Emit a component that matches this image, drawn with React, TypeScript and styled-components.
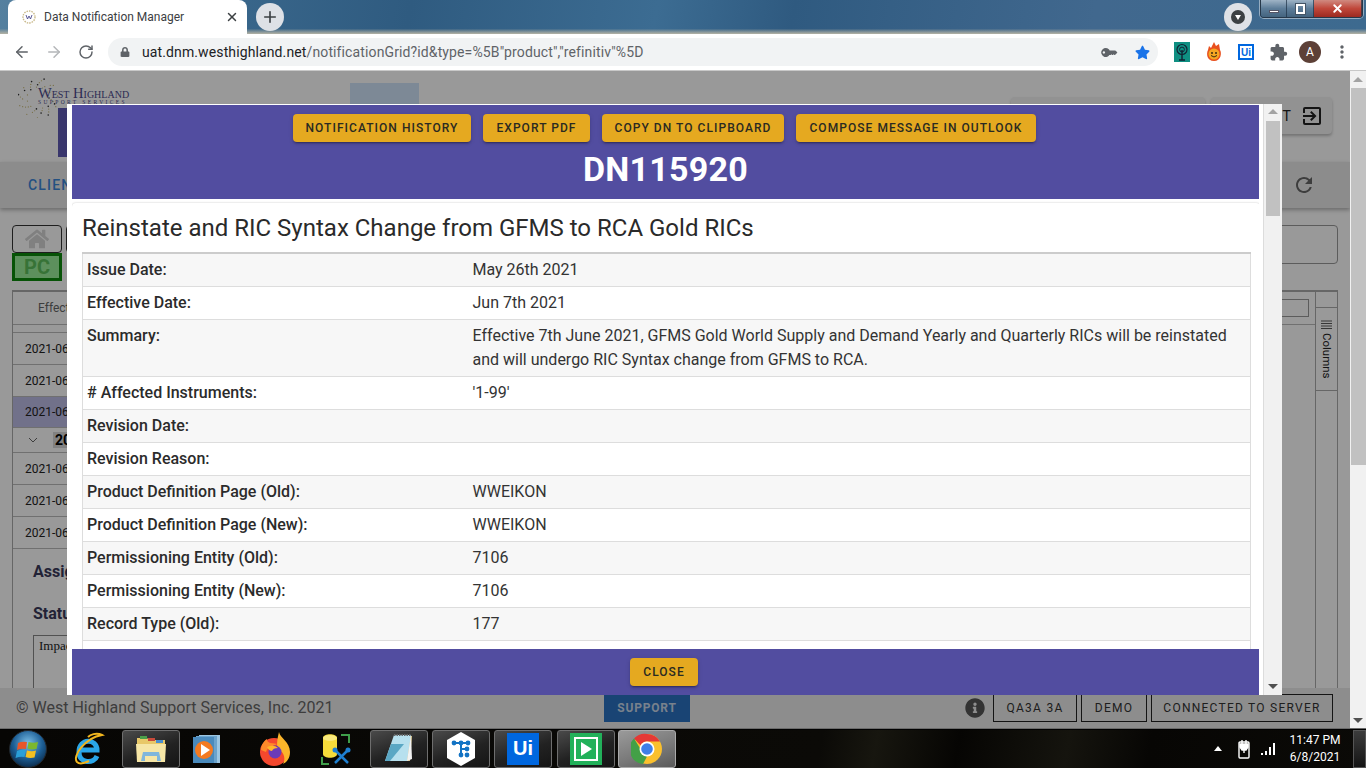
import React from "react";
import styled, { createGlobalStyle } from "styled-components";
import { ArrowLeft, ArrowRight, RotateCw, Plus, X } from "lucide-react";
import { FaHome, FaInfoCircle, FaLock, FaStar, FaKey } from "react-icons/fa";
import { MdExitToApp, MdExtension, MdMoreVert, MdRefresh } from "react-icons/md";

const GlobalStyle = createGlobalStyle`
    html, body {
        margin: 0;
        padding: 0;
        width: 1366px;
        height: 768px;
        overflow: hidden;
        font-family: Roboto, "Liberation Sans", sans-serif;
    }
    * {
        box-sizing: border-box;
    }
`;

const Screen = styled.div`
    width: 1366px;
    height: 768px;
    display: flex;
    flex-direction: column;
    overflow: hidden;
`;

/* browser chrome */
const TabStrip = styled.div`
    height: 34px;
    flex: none;
    position: relative;
    display: flex;
    align-items: flex-start;
    padding-left: 8px;
    background:
        linear-gradient(180deg, rgba(0, 0, 0, 0) 84%, #b5b3a4 100%),
        linear-gradient(100deg, #55809f 0%, #3e6c90 10%, #2f5b80 30%, #3c6c92 48%, #2f5a80 58%, #355f85 65%, #41688e 80%, #3d6a8f 100%);
`;

const Tab = styled.div`
    width: 239px;
    height: 34px;
    background: #fff;
    border-radius: 8px 8px 0 0;
    display: flex;
    align-items: center;
    padding: 0 8px 0 14px;
    color: #3c4043;
    font-size: 12px;
`;

const TabFavicon = styled.svg`
    width: 14px;
    height: 14px;
    margin-right: 8px;
    flex: none;
`;

const TabTitle = styled.span`
    flex: 1;
    white-space: nowrap;
`;

const NewTab = styled.div`
    width: 28px;
    height: 28px;
    margin: 3px 0 0 9px;
    border-radius: 50%;
    background: #dee1e6;
    color: #3c4043;
    display: flex;
    align-items: center;
    justify-content: center;
`;

const ProfileDrop = styled.div`
    position: absolute;
    left: 1224px;
    top: 3px;
    width: 28px;
    height: 28px;
    border-radius: 50%;
    background: #dee1e6;
    display: flex;
    align-items: center;
    justify-content: center;
`;

const ProfileDot = styled.div`
    width: 14px;
    height: 14px;
    border-radius: 50%;
    background: #3c4043;
    display: flex;
    align-items: center;
    justify-content: center;
    &::after {
        content: "";
        border-left: 3.5px solid transparent;
        border-right: 3.5px solid transparent;
        border-top: 5px solid #fff;
    }
`;

const WindowControls = styled.div`
    position: absolute;
    left: 1260px;
    top: 0;
    width: 103px;
    height: 18px;
    display: flex;
    border: 1px solid #26384a;
    border-top: none;
    border-radius: 0 0 4px 4px;
    overflow: hidden;
    box-shadow: 0 0 0 1px rgba(255, 255, 255, 0.45);
`;

const WinButton = styled.div<{ $w: number; $close?: boolean }>`
    width: ${({ $w }) => $w}px;
    display: flex;
    align-items: center;
    justify-content: center;
    color: #fff;
    border-right: 1px solid rgba(30, 50, 70, 0.7);
    background: ${({ $close }) =>
        $close
            ? "linear-gradient(180deg, #d08a80 0%, #c0473a 50%, #9c2a20 100%)"
            : "linear-gradient(180deg, #9fb4c6 0%, #5d7d99 50%, #44647f 100%)"};
`;

const MinGlyph = styled.div`
    width: 10px;
    height: 3px;
    margin-top: 5px;
    background: #fff;
    border: 1px solid #556;
`;

const RestoreGlyph = styled.div`
    width: 9px;
    height: 10px;
    border: 2px solid #fff;
    outline: 1px solid #456;
`;

const Toolbar = styled.div`
    height: 37px;
    flex: none;
    display: flex;
    align-items: center;
    background: #fff;
    border-bottom: 1px solid #c8c8c8;
    padding-left: 13px;
`;

const NavIcon = styled.div<{ $faded?: boolean }>`
    width: 18px;
    height: 18px;
    margin-right: 14px;
    color: ${({ $faded }) => ($faded ? "#b4b6b9" : "#5f6368")};
    display: flex;
    align-items: center;
    justify-content: center;
`;

const Omnibox = styled.div`
    width: 1054px;
    height: 28px;
    margin-left: -1px;
    border-radius: 14px;
    background: #f1f3f4;
    display: flex;
    align-items: center;
    padding: 0 8px 0 12px;
    color: #5f6368;
`;

const Url = styled.div`
    margin-left: 12px;
    flex: 1;
    font-size: 14px;
    letter-spacing: 0.12px;
    color: #5f6368;
    white-space: nowrap;
    b {
        font-weight: 400;
        color: #202124;
    }
`;

const KeyIcon = styled(FaKey)`
    transform: scaleX(-1) rotate(45deg);
`;

const StarIcon = styled(FaStar)`
    margin-left: 20px;
    color: #1a73e8;
`;

const Extensions = styled.div`
    display: flex;
    align-items: center;
    margin-left: 16px;
`;

const ExtSlot = styled.div<{ $w: number }>`
    width: ${({ $w }) => $w}px;
    display: flex;
    align-items: center;
    justify-content: center;
    color: #5f6368;
`;

const UiBadge = styled.div<{ $size: number; $outlined?: boolean }>`
    width: ${({ $size }) => $size}px;
    height: ${({ $size }) => $size}px;
    flex: none;
    display: flex;
    align-items: center;
    justify-content: center;
    font-weight: 700;
    font-family: "Liberation Sans", sans-serif;
    font-size: ${({ $size }) => Math.round($size * 0.62)}px;
    background: ${({ $outlined }) => ($outlined ? "#fff" : "#0067df")};
    color: ${({ $outlined }) => ($outlined ? "#0067df" : "#fff")};
    border: ${({ $outlined }) => ($outlined ? "2px solid #0067df" : "none")};
`;

const Avatar = styled.div`
    width: 22px;
    height: 22px;
    flex: none;
    border-radius: 50%;
    background: #5d4037;
    color: #fff;
    font-size: 12px;
    display: flex;
    align-items: center;
    justify-content: center;
`;

/* application behind the dialog */
const Page = styled.div`
    height: 657px;
    flex: none;
    display: flex;
`;

const Viewport = styled.div`
    width: 1350px;
    height: 657px;
    position: relative;
    overflow: hidden;
    display: flex;
    flex-direction: column;
    background: #fff;
`;

const PageScrollbar = styled.div`
    width: 16px;
    background: #f1f1f1;
    display: flex;
    flex-direction: column;
    align-items: center;
    justify-content: space-between;
    padding: 6px 0 5px;
    position: relative;
`;

const PageThumb = styled.div`
    position: absolute;
    left: 1px;
    right: 0;
    top: 17px;
    height: 377px;
    background: #c1c1c1;
`;

const ScrollArrow = styled.div<{ $down?: boolean; $color?: string }>`
    width: 0;
    height: 0;
    border-left: 5px solid transparent;
    border-right: 5px solid transparent;
    ${({ $down, $color }) =>
        $down
            ? `border-top: 5px solid ${$color || "#505050"};`
            : `border-bottom: 5px solid ${$color || "#a3a3a3"};`}
`;

const TopBar = styled.div`
    height: 91px;
    flex: none;
    display: flex;
    align-items: flex-start;
    padding: 7px 18px 0;
    position: relative;
`;

const Logo = styled.div`
    width: 118px;
    height: 36px;
    display: flex;
    align-items: center;
    position: relative;
`;

const LogoRing = styled.svg`
    position: absolute;
    left: 0;
    top: 0;
    width: 42px;
    height: 40px;
`;

const LogoText = styled.div`
    margin-left: 20px;
    font-family: "Liberation Serif", serif;
    color: #4b4a8c;
    position: relative;
`;

const LogoName = styled.div`
    font-variant: small-caps;
    font-size: 14.5px;
    line-height: 12px;
    white-space: nowrap;
`;

const LogoSub = styled.div`
    font-size: 5.5px;
    letter-spacing: 2.4px;
    line-height: 7px;
    white-space: nowrap;
`;

const PurpleBlock = styled.div`
    position: absolute;
    left: 58px;
    top: 37px;
    width: 100px;
    height: 49px;
    background: #5f5ab5;
`;

const TabBlock = styled.div`
    width: 69px;
    height: 24px;
    margin: 5px 0 0 214px;
    background: #d0e4fa;
`;

const RaisedButton = styled.div<{ $w: number }>`
    width: ${({ $w }) => $w}px;
    height: 37px;
    background: #f3f3f3;
    border-radius: 4px;
    margin-top: 19px;
    margin-left: 6px;
    box-shadow: 0 2px 3px rgba(0, 0, 0, 0.25);
    display: flex;
    align-items: center;
    justify-content: flex-end;
    padding-right: 8px;
    font-size: 14px;
    letter-spacing: 1.2px;
    color: #222;
`;

const LogoutIcon = styled(MdExitToApp)`
    margin-left: 8px;
`;

const Spacer = styled.div`
    flex: 1;
`;

const NavBar = styled.div`
    height: 46px;
    flex: none;
    display: flex;
    align-items: center;
    padding: 0 34px 0 28px;
    background: #eaeaea;
    box-shadow: 0 2px 4px rgba(0, 0, 0, 0.3);
    color: #3c86d8;
    font-size: 14px;
    font-weight: 500;
    letter-spacing: 1.2px;
`;

const Content = styled.div`
    flex: 1;
    min-height: 0;
    overflow: hidden;
    padding: 17px 12px 0 12px;
`;

const ToolRow = styled.div`
    display: flex;
    align-items: flex-start;
`;

const ToolColumn = styled.div`
    width: 50px;
`;

const HomeButton = styled.div`
    height: 28px;
    border: 1px solid #333;
    border-radius: 4px;
    color: #d5d5d5;
    display: flex;
    align-items: center;
    justify-content: center;
`;

const ToolButton = styled.div`
    width: 60px;
    height: 28px;
    margin-left: 4px;
    border: 1px solid #333;
    border-radius: 4px;
`;

const PcChip = styled.div`
    height: 28px;
    background: #9cf09c;
    border: 3px solid #0d8a0d;
    color: #5cc05c;
    font-weight: 700;
    font-size: 20px;
    display: flex;
    align-items: center;
    justify-content: center;
`;

const SearchBox = styled.div`
    width: 500px;
    height: 39px;
    border: 1px solid #999;
    border-radius: 4px;
`;

const Grid = styled.div`
    margin-top: 9px;
    display: flex;
    height: 600px;
    border: 1px solid #aaa;
    border-top-width: 2px;
`;

const GridMain = styled.div`
    flex: 1;
    min-width: 0;
`;

const GridHeader = styled.div`
    height: 33px;
    display: flex;
    align-items: center;
    padding: 0 6px 0 25px;
    font-size: 12px;
    color: #666;
    border-bottom: 1px solid #bbb;
`;

const FilterInput = styled.div`
    margin-left: auto;
    width: 60px;
    height: 18px;
    border: 1px solid #999;
`;

const GridGap = styled.div`
    width: 400px;
    height: 8px;
    border-bottom: 1px solid #bbb;
`;

const GridRow = styled.div<{ $selected?: boolean; $h?: number }>`
    width: 400px;
    height: ${({ $h }) => $h || 32}px;
    display: flex;
    align-items: center;
    padding-left: 12px;
    font-size: 12px;
    color: #222;
    border-bottom: 1px solid #bbb;
    background: ${({ $selected }) => ($selected ? "#bcbce6" : "transparent")};
`;

const GroupChevron = styled.svg`
    width: 10px;
    height: 6px;
    margin: 0 15px 0 3px;
`;

const GroupLabel = styled.span`
    font-size: 14px;
    font-weight: 700;
    color: #000;
    background: #d8d8d8;
    padding: 0 2px;
`;

const Details = styled.div`
    padding: 13px 0 0 20px;
`;

const DetailLabel = styled.div`
    font-size: 16px;
    font-weight: 700;
    color: #3a3a5a;
    line-height: 19px;
    margin-bottom: 23px;
`;

const DetailBox = styled.div`
    margin-top: -11px;
    width: 500px;
    height: 120px;
    border: 1px solid #888;
    padding: 2px 5px;
    font-family: "Liberation Serif", serif;
    font-size: 13px;
    color: #222;
`;

const SidePanel = styled.div`
    width: 22px;
    flex: none;
    border-left: 1px solid #aaa;
`;

const SideCell = styled.div`
    height: 16px;
    border-bottom: 1px solid #aaa;
`;

const ColumnsTab = styled.div`
    height: 83px;
    border-bottom: 1px solid #aaa;
    display: flex;
    flex-direction: column;
    align-items: center;
    padding-top: 12px;
    font-size: 11.5px;
    color: #222;
`;

const ColumnsLabel = styled.span`
    writing-mode: vertical-rl;
    margin-top: 4px;
`;

const PageFooter = styled.div`
    height: 40px;
    flex: none;
    display: flex;
    align-items: center;
    padding: 0 17px 0 16px;
    background: #ececec;
    position: relative;
    font-size: 16px;
    color: #666;
`;

const Copyright = styled.div`
    width: 588px;
    font-weight: 400;
    padding-bottom: 1px;
`;

const SupportButton = styled.div`
    width: 86px;
    height: 27px;
    margin-top: 1px;
    padding-bottom: 1px;
    background: #2a72c2;
    color: #c8d8ea;
    font-size: 12px;
    font-weight: 700;
    letter-spacing: 0.8px;
    display: flex;
    align-items: center;
    justify-content: center;
`;

const InfoIcon = styled.div`
    margin-left: auto;
    margin-right: 4px;
    color: #555;
    display: flex;
`;

const StatusChip = styled.div<{ $w: number }>`
    width: ${({ $w }) => $w}px;
    height: 28px;
    margin-left: 4px;
    border: 1px solid #222;
    color: #333;
    font-size: 12px;
    letter-spacing: 1.25px;
    display: flex;
    align-items: center;
    justify-content: center;
    white-space: nowrap;
`;

const Overlay = styled.div`
    position: absolute;
    inset: 0;
    background: rgba(0, 0, 0, 0.4);
`;

/* dialog */
const Modal = styled.div`
    position: absolute;
    left: 67px;
    top: 33px;
    width: 1215px;
    height: 591px;
    background: #fff;
    display: flex;
`;

const ModalMain = styled.div`
    width: 1197px;
    padding: 1px 4px 0 5px;
    display: flex;
    flex-direction: column;
    border-right: 1px solid #dcdcdc;
`;

const ModalScrollbar = styled.div`
    flex: 1;
    background: #f1f1f1;
    position: relative;
    display: flex;
    flex-direction: column;
    align-items: center;
    justify-content: space-between;
    padding: 5px 0 6px;
`;

const ModalThumb = styled.div`
    position: absolute;
    left: 2px;
    right: 2px;
    top: 17px;
    height: 95px;
    background: #c1c1c1;
`;

const ModalHeader = styled.div`
    height: 94px;
    flex: none;
    background: #524da0;
    display: flex;
    flex-direction: column;
    align-items: center;
    padding-top: 9px;
`;

const ActionRow = styled.div`
    display: flex;
    gap: 12px;
    margin-left: -3px;
`;

const ActionButton = styled.button`
    height: 28px;
    padding: 0 13px;
    border: none;
    border-radius: 4px;
    background: #e5a920;
    color: #2a2a22;
    font-family: Roboto, sans-serif;
    font-size: 12px;
    font-weight: 500;
    letter-spacing: 1.05px;
    text-transform: uppercase;
    white-space: nowrap;
    box-shadow: 0 3px 1px -2px rgba(0, 0, 0, 0.2), 0 2px 2px 0 rgba(0, 0, 0, 0.14), 0 1px 5px 0 rgba(0, 0, 0, 0.12);
`;

const DnTitle = styled.h4`
    margin: 7px 0 0;
    font-size: 34px;
    line-height: 40px;
    font-weight: 700;
    letter-spacing: 0.25px;
    color: #fff;
`;

const ModalBody = styled.div`
    flex: 1;
    min-height: 0;
    overflow: hidden;
    padding-top: 4px;
`;

const Card = styled.div`
    margin-right: -1px;
    padding: 0 9px 20px 10px;
    border-radius: 4px;
    background: #fff;
    box-shadow: 0 0 2px rgba(0, 0, 0, 0.25);
`;

const CardTitle = styled.h5`
    margin: 0;
    padding: 9px 0 8px;
    font-size: 24px;
    line-height: 32px;
    font-weight: 400;
    color: #2a2a2a;
    white-space: nowrap;
`;

const InfoTable = styled.table`
    width: 100%;
    border-collapse: collapse;
    table-layout: fixed;
    border: 1px solid #ddd;
    border-top: 2px solid #ccc;
    font-size: 16px;
    line-height: 24px;
    color: #333;
    tr:nth-child(odd) {
        background: #f7f7f7;
    }
`;

const LabelCell = styled.th`
    width: 385px;
    padding: 4px;
    text-align: left;
    vertical-align: top;
    font-weight: 500;
    color: #2b2b2b;
    border-top: 1px solid #ddd;
`;

const ValueCell = styled.td`
    padding: 4px 5px;
    vertical-align: top;
    border-top: 1px solid #ddd;
`;

const ModalFooter = styled.div`
    height: 46px;
    flex: none;
    background: #524da0;
    display: flex;
    align-items: center;
    justify-content: center;
    padding-right: 3px;
`;

/* windows taskbar */
const Taskbar = styled.div`
    height: 40px;
    flex: none;
    display: flex;
    align-items: center;
    background: linear-gradient(100deg, #070604 0%, #0b0a07 60%, #17160f 64%, #060503 70%, #15140e 78%, #070604 84%, #0b0a07 100%);
    border-top: 1px solid #6a6a6a;
    box-shadow: inset 0 1px 0 #000;
`;

const TaskSlot = styled.div<{ $w: number; $ml?: number; $state?: "active" | "light" }>`
    width: ${({ $w }) => $w}px;
    height: 38px;
    flex: none;
    margin-left: ${({ $ml }) => $ml || 0}px;
    display: flex;
    align-items: center;
    justify-content: center;
    border-radius: 3px;
    ${({ $state }) =>
        $state === "active"
            ? "border: 1px solid #6e6e6e; background: linear-gradient(160deg, #4a4a4a 0%, #222 55%, #151515 100%);"
            : $state === "light"
            ? "border: 1px solid #aaa; background: linear-gradient(160deg, #9a9a9a 0%, #7a7a7a 55%, #5a5a5a 100%);"
            : ""}
`;

const Tray = styled.div`
    margin-left: auto;
    display: flex;
    align-items: center;
    height: 38px;
`;

const TrayArrow = styled.div`
    width: 0;
    height: 0;
    border-left: 4px solid transparent;
    border-right: 4px solid transparent;
    border-bottom: 5px solid #fff;
    margin-right: 16px;
`;

const TrayIcon = styled.svg`
    display: block;
    margin-right: 9px;
`;

const Clock = styled.div`
    width: 58px;
    text-align: center;
    color: #fff;
    font-size: 12px;
    line-height: 17px;
`;

const ShowDesktop = styled.div`
    width: 13px;
    height: 38px;
    margin-left: 9px;
    border: 1px solid #555;
    background: linear-gradient(180deg, #3c3c3c, #141414);
`;

const ROWS: { label: string; value?: string; lines?: string[] }[] = [
    { label: "Issue Date:", value: "May 26th 2021" },
    { label: "Effective Date:", value: "Jun 7th 2021" },
    {
        label: "Summary:",
        lines: [
            "Effective 7th June 2021, GFMS Gold World Supply and Demand Yearly and Quarterly RICs will be reinstated",
            "and will undergo RIC Syntax change from GFMS to RCA.",
        ],
    },
    { label: "# Affected Instruments:", value: "'1-99'" },
    { label: "Revision Date:" },
    { label: "Revision Reason:" },
    { label: "Product Definition Page (Old):", value: "WWEIKON" },
    { label: "Product Definition Page (New):", value: "WWEIKON" },
    { label: "Permissioning Entity (Old):", value: "7106" },
    { label: "Permissioning Entity (New):", value: "7106" },
    { label: "Record Type (Old):", value: "177" },
    { label: "" },
];

const Favicon = () => (
    <TabFavicon viewBox="0 0 14 14">
        <circle cx="7" cy="7" r="6" fill="none" stroke="#c9b98a" strokeWidth="1.4" strokeDasharray="1.5 1" />
        <path d="M4 5l1.5 4L7 6l1.5 3L10 5" fill="none" stroke="#4b4a8c" strokeWidth="0.9" />
    </TabFavicon>
);

const LogoDots = () => {
    const dots = Array.from({ length: 46 }, (_, i) => {
        const a = i * 2.399;
        const r = 11 + (i % 5) * 2.2;
        return { x: 20 + Math.cos(a) * r, y: 20 + Math.sin(a) * r, dark: i % 4 === 0 };
    });
    return (
        <LogoRing viewBox="0 0 42 40">
            {dots.map((d, i) => (
                <circle key={i} cx={d.x} cy={d.y} r={d.dark ? 0.8 : 0.6} fill={d.dark ? "#333" : "#c4b46a"} />
            ))}
        </LogoRing>
    );
};

const FlameIcon = () => (
    <svg width="18" height="20" viewBox="0 0 18 20">
        <path d="M9 0l2 4 3-2 1 6c2 3 1 11-6 11S1 12 3 8l1-4 2 2z" fill="#e8501e" />
        <circle cx="9" cy="12" r="5.5" fill="#f5a623" />
        <circle cx="7" cy="11" r="1" fill="#3a2a10" />
        <circle cx="11" cy="11" r="1" fill="#3a2a10" />
        <path d="M6 13.5q3 3 6 0" stroke="#3a2a10" fill="none" />
    </svg>
);

const TreeIcon = () => (
    <svg width="16" height="20" viewBox="0 0 16 20">
        <rect width="16" height="20" fill="#0f8f82" />
        <circle cx="8" cy="7.5" r="5" fill="none" stroke="#123" strokeWidth="1.2" />
        <circle cx="8" cy="7.5" r="2.4" fill="none" stroke="#123" strokeWidth="1" />
        <path d="M8 8v10M5 18h6" stroke="#123" strokeWidth="1.4" />
    </svg>
);

const StartOrb = () => (
    <svg width="40" height="40" viewBox="0 0 40 40">
        <defs>
            <radialGradient id="orb" cx="50%" cy="35%" r="65%">
                <stop offset="0%" stopColor="#7cc0e8" />
                <stop offset="60%" stopColor="#1d5f96" />
                <stop offset="100%" stopColor="#0b2c4c" />
            </radialGradient>
        </defs>
        <circle cx="20" cy="20" r="18.5" fill="url(#orb)" stroke="#22272c" />
        <path d="M10 14q4-2 9-1l-1 7q-5-1-9 1z" fill="#e8562a" />
        <path d="M20.5 13q5 1.5 9.500 0l-1.500 7q-5 1-9-.5z" fill="#7cb82f" />
        <path d="M9 22q4-2 9-1l-1.500 7q-4-1-9 1z" fill="#2a9fd8" />
        <path d="M19 21.500q5 1.500 9 0l-1.500 7q-5 1-9-.5z" fill="#f4c020" />
    </svg>
);

const IeIcon = () => (
    <svg width="32" height="34" viewBox="0 0 32 34">
        <path d="M7 18h17c0-12-18-12-18 2 0 12 15 12 18 4" fill="none" stroke="#2aa6e8" strokeWidth="5" />
        <path d="M4 30C-1 24 12 6 29 3c-6-3-12 0-14 2M4 30c3 3 8 1 12-1" fill="none" stroke="#f2b61e" strokeWidth="2" />
    </svg>
);

const FolderIcon = () => (
    <svg width="32" height="32" viewBox="0 0 32 32">
        <path d="M2 5h10l2 2h16v22H2z" fill="#e8c868" />
        <rect x="5" y="3" width="7" height="3" fill="#4a9f4a" />
        <rect x="13" y="5" width="7" height="3" fill="#c84a3a" />
        <rect x="21" y="7" width="7" height="3" fill="#4a8fd0" />
        <path d="M1 11h30l-1 18H2z" fill="#f6e6a6" />
        <path d="M8 19h16l2 9H6z" fill="#7fb6dc" />
        <rect x="10" y="23" width="12" height="6" fill="#f6e6a6" />
    </svg>
);

const MediaIcon = () => (
    <svg width="28" height="32" viewBox="0 0 28 32">
        <rect x="6" y="2" width="21" height="28" fill="#9cc6e2" />
        <rect x="3" y="3" width="21" height="27" fill="#6ba3cc" />
        <rect x="0" y="4" width="21" height="26" fill="#4a8abc" />
        <circle cx="11" cy="17" r="9" fill="#f47a20" />
        <path d="M8 11l9 6-9 6z" fill="#fff" />
    </svg>
);

const FirefoxIcon = () => (
    <svg width="32" height="34" viewBox="0 0 32 34">
        <circle cx="15" cy="20" r="14" fill="#f4482e" />
        <path d="M20 0c1 6 11 10 11 20 0 6-3 10-7 12 3-5 1-12-4-14-3-3-2-10 0-18z" fill="#fbb52a" />
        <path d="M2 18c0-5 3-9 6-11 0 2 1 3 3 4 3 0 6 1 7 1-5 3-9 2-11 8z" fill="#ff8a2a" />
        <circle cx="16" cy="20" r="6.500" fill="#6b3bb8" />
        <path d="M8 15q7-3 11 1-5 0-6 3-3 0-5-4z" fill="#ffb52a" />
    </svg>
);

const DbToolIcon = () => (
    <svg width="30" height="34" viewBox="0 0 30 34">
        <path d="M2 6c0-5 14-5 14 0v16c0 5-14 5-14 0z" fill="#f6dc3a" />
        <ellipse cx="9" cy="6" rx="7" ry="3" fill="#f9e97c" />
        <path d="M20 3h8v8M1 25v7h7" fill="none" stroke="#3f9f4a" strokeWidth="2" />
        <path d="M14 18l13 13M27 18L14 31" stroke="#1e7fd0" strokeWidth="2.5" />
        <circle cx="14" cy="18" r="2.5" fill="#1e7fd0" />
        <circle cx="27" cy="18" r="2.5" fill="#1e7fd0" />
    </svg>
);

const NotepadIcon = () => (
    <svg width="32" height="32" viewBox="0 0 32 32">
        <path d="M12 3h17l-2 25H14z" fill="#d9c48a" />
        <path d="M11 2h17l-4 26H2z" fill="#b7e0ee" />
        <path d="M8 11h13L7 28H2z" fill="#5aa7c4" />
        <path d="M24 28l4-26 1 24z" fill="#f3f3f3" />
        <path d="M11 2h17" stroke="#666" strokeWidth="2" strokeDasharray="1.500 1" />
    </svg>
);

const HexIcon = () => (
    <svg width="32" height="36" viewBox="0 0 32 36">
        <path d="M16 1l14 8v18l-14 8-14-8V9z" fill="#fff" />
        <path d="M9 12h14M16 12v12M16 18h6M9 12v0" stroke="#1273c4" strokeWidth="2" />
        <circle cx="9" cy="12" r="2.400" fill="#1273c4" />
        <circle cx="16" cy="12" r="2.400" fill="#1273c4" />
        <circle cx="23" cy="12" r="2.400" fill="#1273c4" />
        <circle cx="22" cy="18" r="2.400" fill="#1273c4" />
        <circle cx="16" cy="24" r="2.400" fill="#1273c4" />
        <circle cx="22" cy="24" r="2.400" fill="#1273c4" />
    </svg>
);

const PlayBoxIcon = () => (
    <svg width="32" height="32" viewBox="0 0 32 32">
        <rect width="32" height="32" fill="#22b15a" />
        <rect x="4" y="4" width="24" height="24" fill="#fff" />
        <rect x="6" y="6" width="20" height="20" fill="#22b15a" />
        <path d="M11 9l11 7-11 7z" fill="#fff" />
    </svg>
);

const ChromeIcon = () => (
    <svg width="32" height="32" viewBox="0 0 32 32">
        <circle cx="16" cy="16" r="15" fill="#fbc02d" />
        <path d="M16 1a15 15 0 0 1 13 7.500H16a7.500 7.500 0 0 0-6.500 3.750L3 5.500A15 15 0 0 1 16 1z" fill="#e53935" />
        <path d="M3 5.500l6.500 10.500A7.500 7.500 0 0 0 16 23.500L12 31A15 15 0 0 1 3 5.500z" fill="#43a047" />
        <circle cx="16" cy="16" r="7.500" fill="#fff" />
        <circle cx="16" cy="16" r="5.800" fill="#3f7fe8" />
    </svg>
);

const App: React.FC = () => {
    return (
        <>
            <GlobalStyle />
            <Screen>
                <TabStrip>
                    <Tab>
                        <Favicon />
                        <TabTitle>Data Notification Manager</TabTitle>
                        <X size={14} strokeWidth={2.5} color="#3c4043" />
                    </Tab>
                    <NewTab>
                        <Plus size={18} strokeWidth={2.2} />
                    </NewTab>
                    <ProfileDrop>
                        <ProfileDot />
                    </ProfileDrop>
                    <WindowControls>
                        <WinButton $w={27}>
                            <MinGlyph />
                        </WinButton>
                        <WinButton $w={27}>
                            <RestoreGlyph />
                        </WinButton>
                        <WinButton $w={49} $close>
                            <X size={13} strokeWidth={3.5} />
                        </WinButton>
                    </WindowControls>
                </TabStrip>

                <Toolbar>
                    <NavIcon>
                        <ArrowLeft size={18} strokeWidth={2} />
                    </NavIcon>
                    <NavIcon $faded>
                        <ArrowRight size={18} strokeWidth={2} />
                    </NavIcon>
                    <NavIcon>
                        <RotateCw size={16} strokeWidth={2.2} />
                    </NavIcon>
                    <Omnibox>
                        <FaLock size={10} />
                        <Url>
                            <b>uat.dnm.westhighland.net</b>/notificationGrid?id&amp;type=%5B"product","refinitiv"%5D
                        </Url>
                        <KeyIcon size={13} />
                        <StarIcon size={15} />
                    </Omnibox>
                    <Extensions>
                        <ExtSlot $w={16}>
                            <TreeIcon />
                        </ExtSlot>
                        <ExtSlot $w={48}>
                            <FlameIcon />
                        </ExtSlot>
                        <ExtSlot $w={16}>
                            <UiBadge $size={16} $outlined>
                                Ui
                            </UiBadge>
                        </ExtSlot>
                        <ExtSlot $w={48}>
                            <MdExtension size={19} />
                        </ExtSlot>
                        <ExtSlot $w={16}>
                            <Avatar>A</Avatar>
                        </ExtSlot>
                        <ExtSlot $w={48}>
                            <MdMoreVert size={20} />
                        </ExtSlot>
                    </Extensions>
                </Toolbar>

                <Page>
                    <Viewport>
                        <TopBar>
                            <Logo>
                                <LogoDots />
                                <LogoText>
                                    <LogoName>West Highland</LogoName>
                                    <LogoSub>SUPPORT SERVICES</LogoSub>
                                </LogoText>
                            </Logo>
                            <PurpleBlock />
                            <TabBlock />
                            <Spacer />
                            <RaisedButton $w={194} />
                            <RaisedButton $w={121}>
                                LOGOUT
                                <LogoutIcon size={24} />
                            </RaisedButton>
                        </TopBar>
                        <NavBar>
                            CLIENT
                            <Spacer />
                            <MdRefresh size={24} color="#666" />
                        </NavBar>
                        <Content>
                            <ToolRow>
                                <ToolColumn>
                                    <HomeButton>
                                        <FaHome size={24} />
                                    </HomeButton>
                                    <PcChip>PC</PcChip>
                                </ToolColumn>
                                <ToolButton />
                                <Spacer />
                                <SearchBox />
                            </ToolRow>
                            <Grid>
                                <GridMain>
                                    <GridHeader>
                                        Effective Date
                                        <FilterInput />
                                    </GridHeader>
                                    <GridGap />
                                    <GridRow>2021-06-07</GridRow>
                                    <GridRow>2021-06-07</GridRow>
                                    <GridRow $selected $h={31}>2021-06-07</GridRow>
                                    <GridRow $h={25}>
                                        <GroupChevron viewBox="0 0 10 6">
                                            <path d="M1 1l4 4 4-4" fill="none" stroke="#666" />
                                        </GroupChevron>
                                        <GroupLabel>2021</GroupLabel>
                                    </GridRow>
                                    <GridRow>2021-06-08</GridRow>
                                    <GridRow>2021-06-08</GridRow>
                                    <GridRow>2021-06-08</GridRow>
                                    <Details>
                                        <DetailLabel>Assigned To</DetailLabel>
                                        <DetailLabel>Status</DetailLabel>
                                        <DetailBox>Impact</DetailBox>
                                    </Details>
                                </GridMain>
                                <SidePanel>
                                    <SideCell />
                                    <ColumnsTab>
                                        <svg width="11" height="9" viewBox="0 0 11 9">
                                            <path d="M0 1h11M0 3.500h11M0 6h11M0 8.500h11" stroke="#333" strokeWidth="0.8" />
                                        </svg>
                                        <ColumnsLabel>Columns</ColumnsLabel>
                                    </ColumnsTab>
                                </SidePanel>
                            </Grid>
                        </Content>
                        <PageFooter>
                            <Copyright>© West Highland Support Services, Inc. 2021</Copyright>
                            <SupportButton>SUPPORT</SupportButton>
                            <InfoIcon>
                                <FaInfoCircle size={20} />
                            </InfoIcon>
                            <StatusChip $w={84}>QA3A 3A</StatusChip>
                            <StatusChip $w={66}>DEMO</StatusChip>
                            <StatusChip $w={182}>CONNECTED TO SERVER</StatusChip>
                        </PageFooter>
                        <Overlay />
                        <Modal>
                            <ModalMain>
                                <ModalHeader>
                                    <ActionRow>
                                        <ActionButton>Notification History</ActionButton>
                                        <ActionButton>Export PDF</ActionButton>
                                        <ActionButton>Copy DN to Clipboard</ActionButton>
                                        <ActionButton>Compose Message in Outlook</ActionButton>
                                    </ActionRow>
                                    <DnTitle>DN115920</DnTitle>
                                </ModalHeader>
                                <ModalBody>
                                    <Card>
                                        <CardTitle>Reinstate and RIC Syntax Change from GFMS to RCA Gold RICs</CardTitle>
                                        <InfoTable>
                                            <tbody>
                                                {ROWS.map((row, i) => (
                                                    <tr key={i}>
                                                        <LabelCell>{row.label}</LabelCell>
                                                        <ValueCell>
                                                            {row.lines
                                                                ? row.lines.map((line) => <div key={line}>{line}</div>)
                                                                : row.value || "\u00a0"}
                                                        </ValueCell>
                                                    </tr>
                                                ))}
                                            </tbody>
                                        </InfoTable>
                                    </Card>
                                </ModalBody>
                                <ModalFooter>
                                    <ActionButton>Close</ActionButton>
                                </ModalFooter>
                            </ModalMain>
                            <ModalScrollbar>
                                <ScrollArrow />
                                <ModalThumb />
                                <ScrollArrow $down />
                            </ModalScrollbar>
                        </Modal>
                    </Viewport>
                    <PageScrollbar>
                        <ScrollArrow />
                        <PageThumb />
                        <ScrollArrow $down />
                    </PageScrollbar>
                </Page>

                <Taskbar>
                    <TaskSlot $w={55}>
                        <StartOrb />
                    </TaskSlot>
                    <TaskSlot $w={67}>
                        <IeIcon />
                    </TaskSlot>
                    <TaskSlot $w={58} $state="active">
                        <FolderIcon />
                    </TaskSlot>
                    <TaskSlot $w={54}>
                        <MediaIcon />
                    </TaskSlot>
                    <TaskSlot $w={82}>
                        <FirefoxIcon />
                    </TaskSlot>
                    <TaskSlot $w={40}>
                        <DbToolIcon />
                    </TaskSlot>
                    <TaskSlot $w={58} $ml={14} $state="active">
                        <NotepadIcon />
                    </TaskSlot>
                    <TaskSlot $w={58} $ml={4} $state="active">
                        <HexIcon />
                    </TaskSlot>
                    <TaskSlot $w={58} $ml={4} $state="active">
                        <UiBadge $size={32}>Ui</UiBadge>
                    </TaskSlot>
                    <TaskSlot $w={58} $ml={5} $state="active">
                        <PlayBoxIcon />
                    </TaskSlot>
                    <TaskSlot $w={58} $ml={3} $state="light">
                        <ChromeIcon />
                    </TaskSlot>
                    <Tray>
                        <TrayArrow />
                        <TrayIcon width="14" height="20" viewBox="0 0 14 20">
                            <rect x="1" y="3" width="10" height="16" rx="1" fill="none" stroke="#fff" strokeWidth="1.4" />
                            <path d="M4 1v4M8 1v4M2 5h8v3l-2 3H4L2 8zM6 11v3" stroke="#fff" strokeWidth="1.4" fill="#fff" />
                        </TrayIcon>
                        <TrayIcon width="16" height="14" viewBox="0 0 16 14">
                            <path d="M1 13v-2M5 13V9M9 13V5M13 13V1" stroke="#fff" strokeWidth="2" />
                        </TrayIcon>
                        <Clock>
                            11:47 PM
                            <br />
                            6/8/2021
                        </Clock>
                        <ShowDesktop />
                    </Tray>
                </Taskbar>
            </Screen>
        </>
    );
};

export default App;
